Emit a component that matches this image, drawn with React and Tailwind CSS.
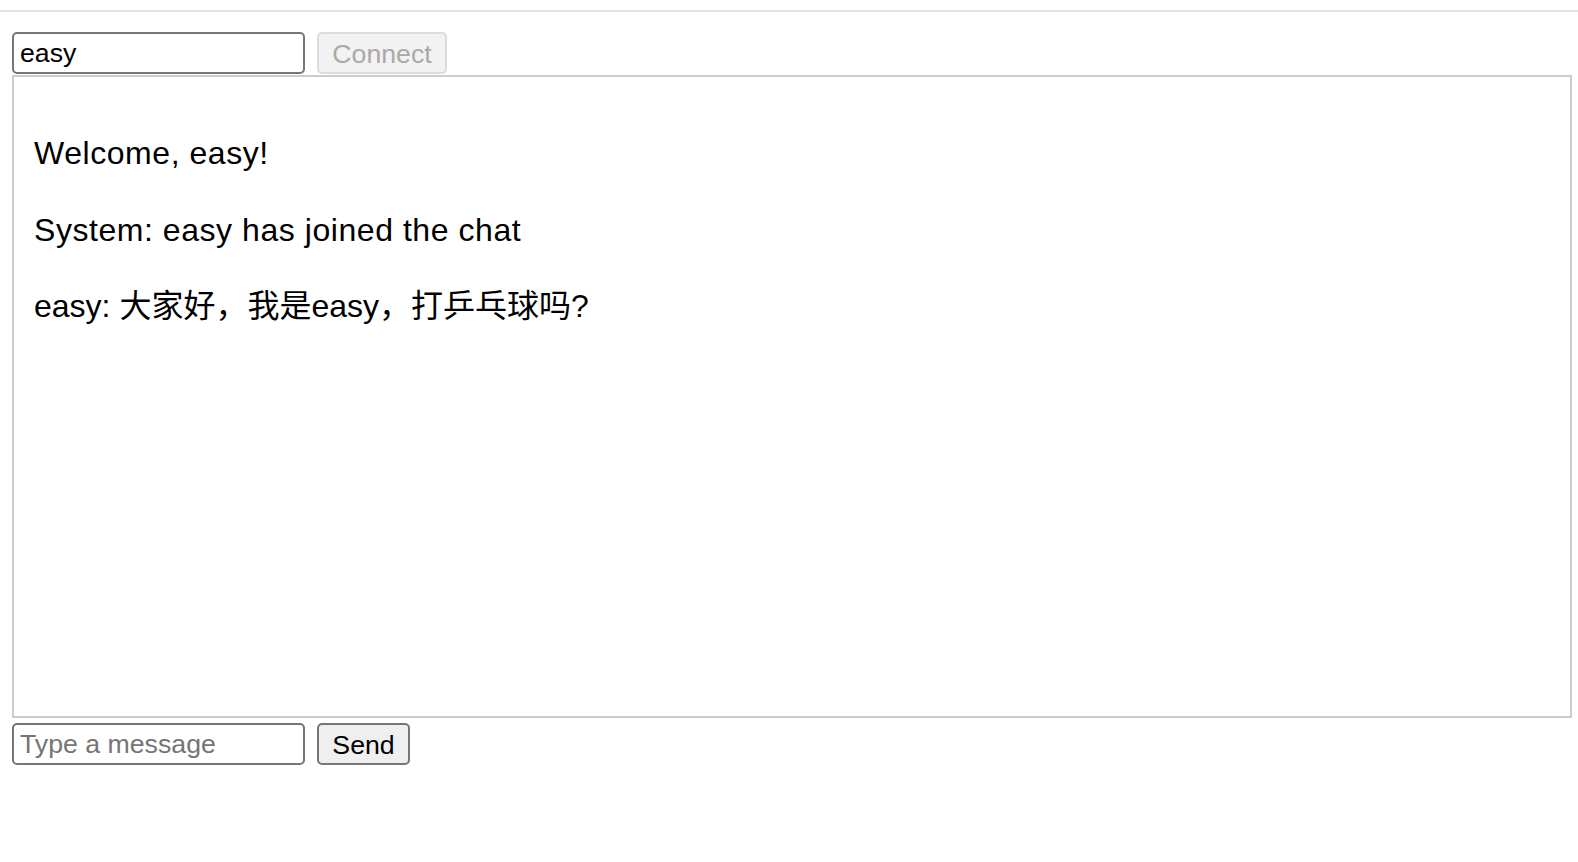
import React, { useState } from 'react';

export default function App() {
  const [name, setName] = useState('easy');
  const [draft, setDraft] = useState('');

  const messages = [
    'Welcome, easy!',
    'System: easy has joined the chat',
    'easy: 大家好，我是easy，打乒乓球吗?',
  ];

  const font = { fontFamily: '"Liberation Sans", "Noto Sans CJK SC", sans-serif' };

  return (
    <div className="w-[1578px] h-[862px] bg-white text-black" style={font}>
      <div className="pt-[10px]">
        <div className="h-[2px] bg-[#e3e3e3]" />
      </div>

      {/* Connect row */}
      <div className="flex items-center gap-[12px] pl-[12px] pt-[20px]">
        <input
          value={name}
          onChange={(e) => setName(e.target.value)}
          className="w-[293px] h-[42px] border-2 border-[#767676] rounded-[5px] px-[6px] text-[26.7px] text-black outline-none"
          style={font}
        />
        <button
          disabled
          className="w-[130px] h-[42px] border-2 border-[#dcdcdc] rounded-[5px] bg-[#f2f2f2] text-[26.7px] text-[#a9a9a9]"
          style={font}
        >
          Connect
        </button>
      </div>

      {/* Messages */}
      <div className="ml-[12px] mt-[1px] w-[1560px] h-[643px] border-2 border-[#cccccc] px-[20px] pt-[56px] flex flex-col gap-[36.5px] overflow-y-auto">
        {messages.map((m, i) => (
          <div
            key={i}
            className={`text-[32px] leading-[40px] whitespace-nowrap ${i < 2 ? 'tracking-[0.55px]' : ''}`}
          >
            {m}
          </div>
        ))}
      </div>

      {/* Send row */}
      <div className="flex items-center gap-[12px] pl-[12px] pt-[5px]">
        <input
          value={draft}
          onChange={(e) => setDraft(e.target.value)}
          placeholder="Type a message"
          className="w-[293px] h-[42px] border-2 border-[#767676] rounded-[5px] px-[6px] text-[26.7px] text-black placeholder:text-[#757575] outline-none"
          style={font}
        />
        <button
          className="w-[93px] h-[42px] border-2 border-[#767676] rounded-[5px] bg-[#efefef] text-[26.7px] text-black"
          style={font}
        >
          Send
        </button>
      </div>
    </div>
  );
}
